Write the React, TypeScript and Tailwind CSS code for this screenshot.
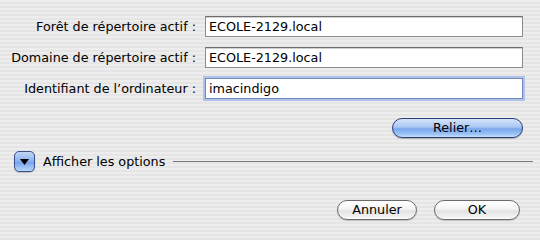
import React from "react";

const font = { fontFamily: '"DejaVu Sans", "Lucida Grande", sans-serif' };

function Field({ label, value, focused }: { label: string; value: string; focused?: boolean }) {
  return (
    <div className="flex items-center h-[21px]">
      <div className="w-[197px] text-right pr-[1px] text-[12.75px] text-black whitespace-nowrap">{label}</div>
      <div
        className={
          "ml-[8px] flex-1 h-[21px] bg-white flex items-center pl-[3px] text-[12.75px] text-black " +
          (focused
            ? "border border-[#7389bd] shadow-[0_0_0_2px_#b1c3e8]"
            : "border border-[#8c8c8c] border-t-[#6e6e6e] shadow-[inset_0_1px_0_#d0d0d0]")
        }
      >
        {value}
      </div>
    </div>
  );
}

export default function App() {
  return (
    <div
      style={font}
      className="w-[540px] h-[240px] overflow-hidden bg-[repeating-linear-gradient(180deg,#ededed_0px,#ededed_2px,#e5e5e5_2px,#e5e5e5_4px)] text-black"
    >
      <div className="flex flex-col pr-[17px] pt-[16px]">
        <Field label="Forêt de répertoire actif :" value="ECOLE-2129.local" />
        <div className="h-[10px]" />
        <Field label="Domaine de répertoire actif :" value="ECOLE-2129.local" />
        <div className="h-[10px]" />
        <Field label="Identifiant de l’ordinateur :" value="imacindigo" focused />
        <div className="flex justify-end mt-[19px]">
          <button className="w-[131px] h-[20px] rounded-full border border-[#2d3f78] bg-[linear-gradient(180deg,#d6e4fb_0%,#a9c6f3_45%,#7aa6ec_55%,#9cc4f6_85%,#c8e0fc_100%)] text-[12.75px] text-black flex items-center justify-center shadow-[0_1px_1px_rgba(0,0,0,0.25)]">
            Relier…
          </button>
        </div>
        <div className="flex items-center mt-[13px] pl-[14px] h-[21px]">
          <div className="w-[21px] h-[21px] rounded-[5px] border border-[#3b4f8c] bg-[linear-gradient(180deg,#c2d6f6_0%,#8fb4f0_45%,#79a4ec_55%,#b6d6fb_100%)] flex items-center justify-center shadow-[0_1px_1px_rgba(0,0,0,0.2)]">
            <svg width="9" height="6" viewBox="0 0 9 6">
              <polygon points="0,0 9,0 4.5,6" fill="#000" />
            </svg>
          </div>
          <span className="ml-[8px] text-[12.75px] whitespace-nowrap">Afficher les options</span>
          <div className="ml-[8px] flex-1 h-px bg-[#7a7a7a] mr-[-10px]" />
        </div>
        <div className="flex justify-end mt-[28px] pr-[3px] gap-[17px]">
          <button className="w-[80px] h-[20px] rounded-full border border-[#6b6b6b] bg-[linear-gradient(180deg,#ffffff_0%,#f4f4f4_45%,#e2e2e2_55%,#f3f3f3_90%,#ffffff_100%)] text-[12.75px] text-black flex items-center justify-center shadow-[0_1px_1px_rgba(0,0,0,0.2)]">
            Annuler
          </button>
          <button className="w-[86px] h-[20px] rounded-full border border-[#6b6b6b] bg-[linear-gradient(180deg,#ffffff_0%,#f4f4f4_45%,#e2e2e2_55%,#f3f3f3_90%,#ffffff_100%)] text-[12.75px] text-black flex items-center justify-center shadow-[0_1px_1px_rgba(0,0,0,0.2)]">
            OK
          </button>
        </div>
      </div>
    </div>
  );
}
